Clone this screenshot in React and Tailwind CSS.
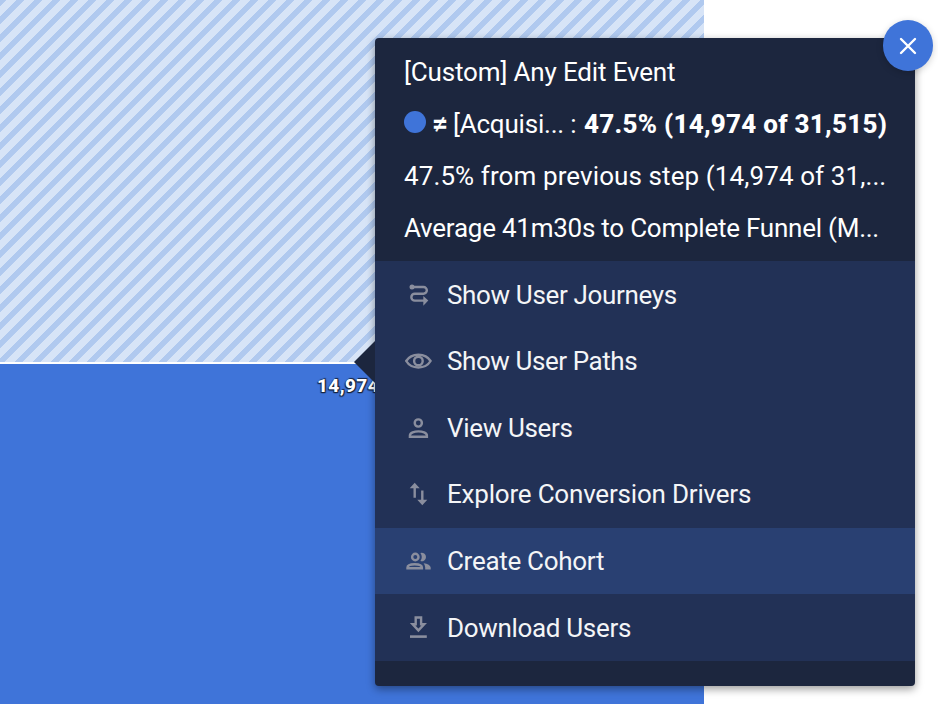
const Svg = ({ children }) => (
  <svg width="28" height="28" viewBox="0 0 28 28" fill="none" stroke="#8a8e9e" strokeWidth="2.4" className="shrink-0">
    {children}
  </svg>
);

const Journey = () => (
  <Svg>
    <circle cx="8" cy="6.9" r="2.5" fill="#8a8e9e" stroke="none" />
    <path d="M8 7H19.5a3.35 3.35 0 0 1 0 6.7H10.8a3.45 3.45 0 0 0 0 6.9H20" />
    <path d="M19.3 15.9 24.3 20.6 19.3 25.7Z" fill="#8a8e9e" stroke="none" />
  </Svg>
);
const Eye = () => (
  <Svg>
    <path d="M2.2 14C7.4 5.6 21.4 5.6 26.6 14C21.4 22.6 7.4 22.6 2.2 14Z" strokeLinejoin="round" />
    <circle cx="14.4" cy="14" r="4.3" />
  </Svg>
);
const Person = () => (
  <Svg>
    <circle cx="14.3" cy="9" r="3.6" />
    <path d="M5.9 22.7V21.5C5.9 18.8 10.5 17.4 14.4 17.4S22.9 18.8 22.9 21.5V22.7Z" />
  </Svg>
);
const Arrows = () => (
  <Svg>
    <path d="M10.7 17.7V7M18.3 10.4V21" />
    <path d="M10.7 2.8 15.7 8.2H5.7ZM18.3 25.2 13.3 19.8H23.3Z" fill="#8a8e9e" stroke="none" />
  </Svg>
);
const People = () => (
  <Svg>
    <circle cx="11.3" cy="10" r="3.2" />
    <path d="M3.5 21.2V20.6C3.5 18.4 7.3 17.3 10.7 17.3S17.9 18.4 17.9 20.6V21.2Z" />
    <path d="M16.4 5.9A4.3 4.3 0 1 1 16.4 14.1Q19.2 10 16.4 5.9ZM19.6 16.2C23.5 16.8 26.7 18.3 26.7 20.8V22.4H21.2V20.6Q21.2 18 19.6 16.2Z" fill="#8a8e9e" stroke="none" />
  </Svg>
);
const Download = () => (
  <Svg>
    <path d="M11.7 3.5H17.1V10.2H20.2L14.4 16.4 8.6 10.2H11.7Z" />
    <path d="M6 22.6H22.8" strokeWidth="2.6" />
  </Svg>
);

const items = [
  { icon: Journey, label: "Show User Journeys", cls: "tracking-[-0.34px] pt-0.5" },
  { icon: Eye, label: "Show User Paths", cls: "tracking-[-0.42px] pt-0.5" },
  { icon: Person, label: "View Users", cls: "tracking-[-0.34px] pt-0.5" },
  { icon: Arrows, label: "Explore Conversion Drivers", cls: "tracking-[-0.2px]" },
  { icon: People, label: "Create Cohort", cls: "tracking-[-0.3px] pt-0.5", active: true },
  { icon: Download, label: "Download Users", cls: "tracking-[-0.32px] pt-0.5" },
];

export default function App() {
  return (
    <div className="relative h-[704px] w-[938px] overflow-hidden bg-white font-['Roboto',sans-serif]">
      <div className="flex h-full w-[704px] flex-col">
        <div className="h-[362px] shrink-0 bg-[repeating-linear-gradient(135deg,#b0c9ef_0px,#b0c9ef_4.2px,#d7e4f7_4.9px,#d7e4f7_11.3px,#b0c9ef_12px,#b0c9ef_12.728px)]" />
        <div className="h-0.5 shrink-0 bg-white" />
        <div className="flex-1 bg-[#3f74d9] pt-[10px] pl-[317px] text-[19px] leading-6 font-extrabold tracking-[0.4px] text-white [text-shadow:1px_1px_1px_#17243f,-1px_1px_1px_#17243f,1px_-1px_1px_#17243f,0_1px_1px_#17243f]">
          14,974
        </div>
      </div>

      <div className="absolute top-[38px] left-[375px] flex h-[648px] w-[540px] flex-col rounded bg-[#1c263e] text-[26px] whitespace-nowrap text-white shadow-[0_3px_9px_rgba(0,0,0,0.4)]">
        <svg className="absolute top-[303px] -left-[21px]" width="21" height="42" viewBox="0 0 21 42">
          <path d="M21 0V42L0 21Z" fill="#1c263e" />
        </svg>
        <div className="flex h-[223px] flex-col pt-2 pl-[29px] leading-[52px]">
          <div><span className="tracking-[-0.15px]">[Custom] Any Edit Event</span></div>
          <div className="flex">
            <span className="mt-[13px] mr-[6px] size-[22px] rounded-full bg-[#3f74d9]" />
            <span className="w-[21px] text-[28px] font-bold">≠</span>
            <span className="w-[131px] tracking-[-0.2px]">[Acquisi... :</span>
            <span className="font-extrabold tracking-[0.26px]">47.5% (14,974 of 31,515)</span>
          </div>
          <div><span className="tracking-[0.1px]">47.5% from previous step (14,974 of 31,...</span></div>
          <div><span className="tracking-[-0.24px]">Average 41m30s to Complete Funnel (M...</span></div>
        </div>
        <div className="grid h-[400px] grid-rows-6 bg-[#223156] text-[#f4f5f7]">
          {items.map(({ icon: Icon, label, cls, active }) => (
            <div key={label} className={`flex items-center gap-[15px] pl-[29px] ${active ? "bg-[#294072]" : ""}`}>
              <Icon />
              <span className={cls}>{label}</span>
            </div>
          ))}
        </div>
      </div>

      <button className="absolute top-5 left-[883px] flex h-[51px] w-[50px] items-center justify-center rounded-full bg-[#3f74d9] shadow-[0_2px_7px_rgba(0,0,0,0.18)]">
        <svg width="18" height="18" viewBox="0 0 18 18" stroke="#fff" strokeWidth="2.4" strokeLinecap="round">
          <path d="M2 2 16 16M16 2 2 16" />
        </svg>
      </button>
    </div>
  );
}
